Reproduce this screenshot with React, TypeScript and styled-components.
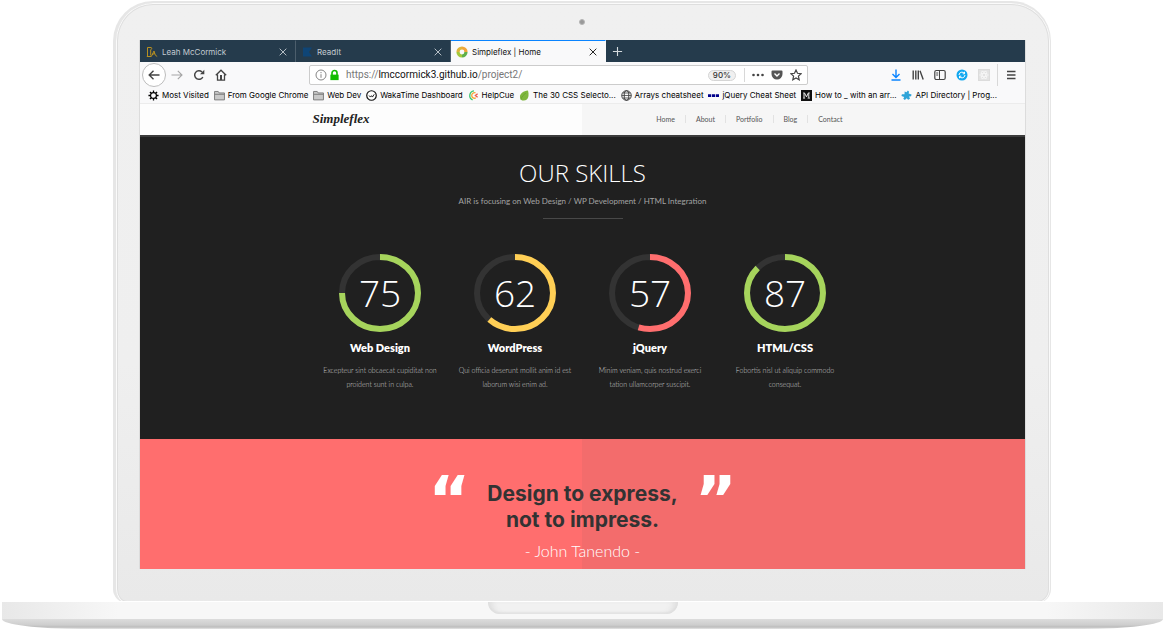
import React from "react";
import styled, { createGlobalStyle } from "styled-components";

const GlobalStyle = createGlobalStyle`
  *, *::before, *::after { box-sizing: border-box; }
  body { margin: 0; background: #fff; }
  button, input { font: inherit; color: inherit; }
  h1, h2, h3, p, ul, blockquote { margin: 0; padding: 0; }
  a { color: inherit; text-decoration: none; }
`;

const ui = `Inter, "Liberation Sans", sans-serif`;
const display = `"Open Sans", "Noto Sans", sans-serif`;
const copy = `Lato, "Open Sans", sans-serif`;

/* Laptop shell */

const Lid = styled.div`
  margin: 1px 113px 0;
  padding: 37px 25px 34px 24px;
  border: 1px solid #e6e6e6;
  border-width: 2px 1px 0 3px;
  border-radius: 40px 40px 14px 14px;
  background: linear-gradient(#f0f0f0, #efefef 60%, #e9e9e9);
  box-shadow: inset 0 0 0 1px #fafafa, inset 0 0 0 2px #dedede;
  position: relative;
`;

const Camera = styled.span`
  position: absolute;
  top: 16px;
  left: 50%;
  width: 6px;
  height: 6px;
  margin-left: -4px;
  border: 1px solid #b5b5b5;
  border-radius: 50%;
  background: #999;
`;

const Screen = styled.div`
  box-shadow: -1px 0 #dcdcdc, 1px 0 #dcdcdc;
  background: #202020;
  overflow: hidden;
`;

const Base = styled.div`
  position: relative;
  margin: -2px 1px 0 2px;
`;

const Deck = styled.div`
  display: flex;
  justify-content: center;
  height: 18px;
  border-top: 1px solid #fff;
  background: linear-gradient(90deg, #e8e8e8, #f7f7f7 10%, #f7f7f7 90%, #e8e8e8);
`;

const Notch = styled.div`
  width: 190px;
  height: 12px;
  border-radius: 0 0 16px 16px;
  background: #f1f1f1;
  box-shadow: inset 8px 0 6px -4px #dedede, inset -8px 0 6px -4px #dedede, inset 0 -2px 2px #e2e2e2;
`;

const Underside = styled.div`
  height: 10px;
  border-radius: 0 0 80px 80px / 0 0 10px 10px;
  background: linear-gradient(#dcdcdc, #cdcdcd 60%, #bdbdbd 80%, #e6e6e6);
`;

/* Browser chrome */

const TabBar = styled.div`
  display: flex;
  height: 22px;
  padding-left: 1px;
  background: #253b4c;
  font: 8px/22px ${ui};
`;

const TabItem = styled.div<{ $active?: boolean }>`
  display: flex;
  align-items: center;
  gap: 4px;
  width: 155px;
  padding: 0 6px 0 5px;
  border-top: 1px solid ${(p) => (p.$active ? "#0a84ff" : "#253b4c")};
  border-right: 1px solid ${(p) => (p.$active ? "#f9f9fa" : "#4c5e6c")};
  background: ${(p) => (p.$active ? "#f9f9fa" : "#253b4c")};
  color: ${(p) => (p.$active ? "#111" : "#c3cad0")};
`;

const TabTitle = styled.span`
  flex: 1;
  white-space: nowrap;
`;

const IconButton = styled.button<{ $round?: boolean }>`
  display: flex;
  align-items: center;
  justify-content: center;
  flex: none;
  width: ${(p) => (p.$round ? 24 : 22)}px;
  height: ${(p) => (p.$round ? 24 : 22)}px;
  padding: 0;
  border: ${(p) => (p.$round ? "1px solid #bdbdbd" : "0")};
  border-radius: ${(p) => (p.$round ? "50%" : "2px")};
  background: ${(p) => (p.$round ? "#fff" : "none")};
  color: inherit;
`;

const CloseButton = styled(IconButton)`
  width: 12px;
  height: 12px;
`;

const NewTabButton = styled(IconButton)`
  color: #d4dade;
`;

const PocketButton = styled(IconButton)`
  width: 16px;
`;

const Toolbar = styled.div`
  display: flex;
  align-items: center;
  height: 26px;
  padding: 0 3px 0 2px;
  background: #f9f9fa;
  color: #444;
`;

const AddressBar = styled.form`
  display: flex;
  align-items: center;
  flex: 1;
  height: 20px;
  margin: 0 77px;
  padding: 0 0 0 5px;
  border: 1px solid #ccc;
  border-radius: 2px;
  background: #fff;
`;

const AddressField = styled.label`
  display: flex;
  flex: 1;
  margin-left: 4px;
  position: relative;
  font: 10px/20px Roboto, sans-serif;
`;

const AddressInput = styled.input`
  width: 100%;
  padding: 0;
  border: 0;
  outline: 0;
  background: none;
  color: transparent;
`;

const AddressText = styled.span`
  position: absolute;
  inset: 0;
  color: #777;
  pointer-events: none;
  b { font-weight: 400; color: #111; }
`;

const Zoom = styled.button`
  height: 11px;
  padding: 0 4px;
  border: 1px solid #d5d5d5;
  border-radius: 6px;
  background: #f0f0f0;
  font: 500 8px/9px ${ui};
  color: #333;
`;

const Divider = styled.span<{ $tall?: boolean }>`
  width: 1px;
  height: ${(p) => (p.$tall ? 22 : 14)}px;
  margin: ${(p) => (p.$tall ? "0 2px" : "0 2px 0 8px")};
  background: #d8d8d8;
`;

const Bookmarks = styled.nav`
  display: flex;
  align-items: center;
  justify-content: space-between;
  height: 15px;
  padding: 0 28px 0 8px;
  background: #f9f9fa;
  font: 8px/15px ${ui};
  color: #000;
  white-space: nowrap;
`;

const Bookmark = styled.a`
  display: flex;
  align-items: center;
  gap: 3px;
`;

/* Web page */

const Header = styled.header`
  height: 34px;
  border-top: 1px solid #ececec;
  border-bottom: 2px solid #3c3c3c;
  background: linear-gradient(90deg, #fdfdfd 50%, #f6f6f6 50%);
`;

const HeaderInner = styled.div`
  display: flex;
  align-items: center;
  justify-content: space-between;
  max-width: 540px;
  height: 30px;
  margin: 0 auto;
`;

const Brand = styled.a`
  font: italic bold 13px/28px "Liberation Serif", serif;
  color: #222;
`;

const SiteNav = styled.nav`
  display: flex;
  font: 7px/8px ${copy};
  color: #555;
  a { padding: 0 10px; }
  a + a { border-left: 1px solid #e2e2e2; }
`;

const Skills = styled.section`
  padding: 20px 0 48px;
  background: #202020;
  color: #fff;
  text-align: center;
`;

const SkillsTitle = styled.h1`
  font: 300 24px/32px ${display};
`;

const SkillsLead = styled.p`
  margin-top: 5px;
  font: 8px/14px ${copy};
  color: #a4a4a4;
`;

const Rule = styled.hr`
  width: 80px;
  height: 1px;
  margin: 10px auto 35px;
  border: 0;
  background: #484848;
`;

const SkillGrid = styled.div`
  display: grid;
  grid-template-columns: repeat(4, 1fr);
  max-width: 540px;
  margin: 0 auto;
`;

const Gauge = styled.div`
  display: grid;
  justify-items: center;
  align-items: start;
  svg, span { grid-area: 1 / 1; }
`;

const GaugeValue = styled.span`
  font: 300 37px/78px ${display};
`;

const SkillName = styled.h2`
  margin-top: 8px;
  font: 800 11px/16px ${copy};
`;

const SkillText = styled.p`
  margin-top: 7px;
  font: 300 7px/14px ${copy};
  color: #ccc;
`;

const Testimonial = styled.section`
  display: flex;
  justify-content: center;
  gap: 17px;
  height: 130px;
  padding-top: 33px;
  background: linear-gradient(90deg, #ff6e6e 50%, #f36c6c 50%);
  text-align: center;
  color: #fff;
`;

const QuoteMark = styled.span`
  font: bold 64px/56px "DejaVu Sans", sans-serif;
`;

const Quote = styled.blockquote`
  margin-top: 9px;
  font: 700 21px/26px ${ui};
  color: #333;
`;

const Author = styled.p`
  margin-top: 8px;
  font: 300 16px/20px ${copy};
  color: #fff;
`;

/* Icons */

type IconProps = { size?: number; width?: number; children: React.ReactNode };
const Icon = ({ size = 12, width = 1, children }: IconProps) => (
  <svg width={size} height={size} viewBox="0 0 12 12" fill="none" stroke="currentColor" strokeWidth={width} aria-hidden="true">
    {children}
  </svg>
);

const Close = () => <Icon size={10} width={1.1}><path d="M2 2l8 8M10 2l-8 8" /></Icon>;

const Folder = () => (
  <Icon size={11}><path d="M.6 10.8V1.6h4l1 1.6h5.8v7.6z" fill="#c9c9c9" stroke="#777" /><path d="M.6 4.7h10.8" stroke="#777" /></Icon>
);

const bookmarks: { label: string; icon: React.ReactNode }[] = [
  {
    label: "Most Visited",
    icon: <Icon size={11}><circle cx="6" cy="6" r="3.2" strokeWidth="1.3" /><path d="M6 .5v2M6 9.500v2M.5 6h2M9.500 6h2M2.100 2.100l1.500 1.500M8.400 8.400l1.500 1.500M9.900 2.100L8.400 3.600M3.600 8.400L2.100 9.900" strokeWidth="1.400" /></Icon>,
  },
  { label: "From Google Chrome", icon: <Folder /> },
  { label: "Web Dev", icon: <Folder /> },
  {
    label: "WakaTime Dashboard",
    icon: <Icon size={11} width={1.3}><circle cx="6" cy="6" r="5.200" fill="#fff" stroke="#111" /><path d="M3.300 6l1.500 1.700L6 6.200l1 1.500 2-3" stroke="#111" strokeWidth="1" /></Icon>,
  },
  {
    label: "HelpCue",
    icon: <Icon size={11} width={1.4}><path d="M6.500.9A5.200 5.200 0 0 0 5 10.800" stroke="#35c46b" /><path d="M8.200 3.200a3 3 0 1 0 .3 5.400" stroke="#f6a534" /><path d="M10.500 4L8 6l2.500 2" stroke="#ef5b4c" /></Icon>,
  },
  {
    label: "The 30 CSS Selecto...",
    icon: <Icon size={11}><path d="M9.700.5C5 1 1 3.500 1 7.500c0 2.500 1.700 4 4.200 4 5.500 0 6-6.500 4.500-11z" fill="#7fb73e" stroke="none" /><path d="M2 10.500C3 7 5 5 7.500 3.500" stroke="#609c28" strokeWidth=".7" /></Icon>,
  },
  {
    label: "Arrays cheatsheet",
    icon: <Icon size={11}><circle cx="6" cy="6" r="5.200" stroke="#333" /><ellipse cx="6" cy="6" rx="2.500" ry="5.200" stroke="#333" /><path d="M.8 6h10.400M1.700 3.300h8.600M1.700 8.700h8.600" stroke="#333" strokeWidth=".8" /></Icon>,
  },
  {
    label: "jQuery Cheat Sheet",
    icon: <Icon size={11}><path d="M0 6h3.500M4.300 6h3.400M8.500 6H12" stroke="#00008b" strokeWidth="3" /></Icon>,
  },
  {
    label: "How to _ with an arr...",
    icon: <Icon size={11}><path d="M0 0h12v12H0z" fill="#111" stroke="none" /><path d="M2.500 3.200h1.300L6 7.500l2-4.300h1.500M3.300 3.500v5M2.300 8.800h2.200M8.500 3.500v5M7.200 8.800h2.500" stroke="#fff" /></Icon>,
  },
  {
    label: "API Directory | Prog...",
    icon: <Icon size={11}><path d="M4 1.500l2 1 1.500-2 1.300 1.300-.5 2 3.200 1-.5 2-2.200.3 1 2.500-2 .9-1.600-1.500-2 2-1.700-1.500 1-2L.5 6.500 1 4.700l2.800-.2z" fill="#2fa4d8" stroke="none" /></Icon>,
  },
];

const skills = [
  { value: 75, arc: 75, color: "#a6d45c", name: "Web Design", text: ["Excepteur sint obcaecat cupiditat non", "proident sunt in culpa."] },
  { value: 62, arc: 62, color: "#ffcf55", name: "WordPress", text: ["Qui officia deserunt mollit anim id est", "laborum wisi enim ad."] },
  { value: 57, arc: 55, color: "#ff6e6e", name: "jQuery", text: ["Minim veniam, quis nostrud exerci", "tation ullamcorper suscipit."] },
  { value: 87, arc: 87, color: "#a6d45c", name: "HTML/CSS", text: ["Fobortis nisl ut aliquip commodo", "consequat."] },
];

const ringPath = "M41 3A38 36 0 0 1 41 75A38 36 0 0 1 41 3";

const Ring = ({ arc, color }: { arc: number; color: string }) => (
  <svg width="82" height="78" viewBox="0 0 82 78" fill="none" strokeWidth="6" aria-hidden="true">
    <path d={ringPath} stroke="#333" />
    <path d={ringPath} stroke={color} pathLength={100} strokeDasharray={`${arc} 100`} />
  </svg>
);

export default function App() {
  return (
    <>
      <GlobalStyle />
      <Lid>
        <Camera />
        <Screen>
          <TabBar>
            <TabItem>
              <Icon size={12}><path d="M1.500 10V1.500h3.500c1 0 1 2-.3 2.200V9.500M.8 10.500h4.500L8 5l1.200 4 2 1.500M6 8.500L8.500 7.500" stroke="#c99a1c" strokeWidth=".9" /></Icon>
              <TabTitle>Leah McCormick</TabTitle>
              <CloseButton aria-label="Close Leah McCormick"><Close /></CloseButton>
            </TabItem>
            <TabItem>
              <Icon size={12}><path d="M2 1.500h9L8 6l3 4.500H2z" fill="#0f4576" stroke="none" /></Icon>
              <TabTitle>ReadIt</TabTitle>
              <CloseButton aria-label="Close ReadIt"><Close /></CloseButton>
            </TabItem>
            <TabItem $active>
              <Icon size={12} width={3.2}>
                <path d="M2 6A4 4 0 0 1 6 2" stroke="#ddb53c" /><path d="M6 2a4 4 0 0 1 4 4" stroke="#f0a53a" />
                <path d="M10 6a4 4 0 0 1-4 4" stroke="#5fb04a" /><path d="M6 10a4 4 0 0 1-4-4" stroke="#a4c83c" />
              </Icon>
              <TabTitle>Simpleflex | Home</TabTitle>
              <CloseButton aria-label="Close Simpleflex"><Close /></CloseButton>
            </TabItem>
            <NewTabButton aria-label="New tab"><Icon size={11} width={1.2}><path d="M6 1v10M1 6h10" /></Icon></NewTabButton>
          </TabBar>

          <Toolbar>
            <IconButton $round aria-label="Back"><Icon width={1.4}><path d="M11.500 6H1.500M5.500 1.800L1.200 6l4.300 4.200" /></Icon></IconButton>
            <IconButton aria-label="Forward"><Icon width={1.1}><path d="M.5 6h10.500M6.800 1.800L11 6l-4.200 4.200" stroke="#a5a5a5" /></Icon></IconButton>
            <IconButton aria-label="Reload"><Icon width={1.5}><path d="M9.800 8A4.300 4.300 0 1 1 9 3" /><path d="M11.300.8v4.400H7z" fill="currentColor" stroke="none" /></Icon></IconButton>
            <IconButton aria-label="Home"><Icon width={1.3}><path d="M.8 6.300L6 1.200l5.200 5.100M2.500 5.500v5.700h7V5.500" /><path d="M6 6v5" strokeWidth="2" /></Icon></IconButton>
            <AddressBar>
              <Icon size={12} width={0.9}><circle cx="6" cy="6" r="5" stroke="#777" /><path d="M6 5.200v3.600M6 3v1.200" stroke="#777" /></Icon>
              <Icon size={15}><path d="M4 5.500V4a2 2 0 0 1 4 0v1.500" stroke="#12bc00" strokeWidth="1.300" /><path d="M2.700 5.300h6.600v4.400H2.700z" fill="#12bc00" stroke="none" /></Icon>
              <AddressField>
                <AddressInput aria-label="Address" />
                <AddressText>https://<b>lmccormick3.github.io</b>/project2/</AddressText>
              </AddressField>
              <Zoom type="button">90%</Zoom>
              <Divider />
              <IconButton type="button" aria-label="Page actions"><Icon><g fill="currentColor" stroke="none"><circle cx="1.500" cy="6" r="1.300" /><circle cx="6" cy="6" r="1.300" /><circle cx="10.500" cy="6" r="1.300" /></g></Icon></IconButton>
              <PocketButton type="button" aria-label="Save to Pocket"><Icon><path d="M1.500 1.500h9a1 1 0 0 1 1 1V5a5.500 5.500 0 0 1-11 0V2.500a1 1 0 0 1 1-1z" fill="#555" stroke="none" /><path d="M3.500 4.500L6 7l2.500-2.500" stroke="#fff" strokeWidth="1.400" /></Icon></PocketButton>
              <IconButton type="button" aria-label="Bookmark"><Icon width={1.2}><path d="M6 1l1.500 3.300 3.600.4-2.700 2.400.8 3.600L6 8.900l-3.200 1.800.8-3.600L.9 4.700l3.600-.4z" /></Icon></IconButton>
            </AddressBar>
            <IconButton aria-label="Downloads"><Icon width={1.4}><path d="M6 .5v8M2.500 5L6 8.500 9.500 5M1.500 11h9" stroke="#0a84ff" /></Icon></IconButton>
            <IconButton aria-label="Library"><Icon width={1.4}><path d="M1.200 1.500v9M3.800 1.500v9M6.300 1.500v9M8 1.800l3.200 8.700" /></Icon></IconButton>
            <IconButton aria-label="Sidebars"><Icon width={1.2}><rect x=".8" y="1.500" width="10.400" height="9" rx="1.500" /><path d="M5.500 1.500v9M2.200 4h2M2.200 6h2" strokeWidth="1" /></Icon></IconButton>
            <IconButton aria-label="Sync"><Icon><circle cx="6" cy="6" r="5.500" fill="#12a8f0" stroke="none" /><path d="M3 6a3 3 0 0 1 5.500-1.500M9 6a3 3 0 0 1-5.500 1.500M8.500 2.800v2H6.700M3.500 9.200v-2h1.800" stroke="#fff" /></Icon></IconButton>
            <IconButton aria-label="Extension"><Icon><rect x=".5" y=".5" width="11" height="11" fill="#e2e2e2" stroke="#dcdcdc" /><g stroke="#f7f7f7" strokeWidth=".8"><ellipse cx="6" cy="6" rx="4.300" ry="1.700" /><ellipse cx="6" cy="6" rx="4.300" ry="1.700" transform="rotate(60 6 6)" /><ellipse cx="6" cy="6" rx="4.300" ry="1.700" transform="rotate(120 6 6)" /></g></Icon></IconButton>
            <Divider $tall />
            <IconButton aria-label="Menu"><Icon width={1.4}><path d="M2 2.500h8.500M2 6h8.500M2 9.500h8.500" /></Icon></IconButton>
          </Toolbar>

          <Bookmarks aria-label="Bookmarks">
            {bookmarks.map((b) => (
              <Bookmark href="#" key={b.label}>{b.icon}{b.label}</Bookmark>
            ))}
          </Bookmarks>

          <Header>
            <HeaderInner>
              <Brand href="#">Simpleflex</Brand>
              <SiteNav aria-label="Site">
                {["Home", "About", "Portfolio", "Blog", "Contact"].map((n) => <a href="#" key={n}>{n}</a>)}
              </SiteNav>
            </HeaderInner>
          </Header>

          <Skills>
            <SkillsTitle>OUR SKILLS</SkillsTitle>
            <SkillsLead>AIR is focusing on Web Design / WP Development / HTML Integration</SkillsLead>
            <Rule />
            <SkillGrid>
              {skills.map((s) => (
                <article key={s.name}>
                  <Gauge><Ring arc={s.arc} color={s.color} /><GaugeValue>{s.value}</GaugeValue></Gauge>
                  <SkillName>{s.name}</SkillName>
                  <SkillText>{s.text[0]}<br />{s.text[1]}</SkillText>
                </article>
              ))}
            </SkillGrid>
          </Skills>

          <Testimonial>
            <QuoteMark>“</QuoteMark>
            <div>
              <Quote>Design to express,<br />not to impress.</Quote>
              <Author>- John Tanendo -</Author>
            </div>
            <QuoteMark>”</QuoteMark>
          </Testimonial>
        </Screen>
      </Lid>
      <Base>
        <Deck><Notch /></Deck>
        <Underside />
      </Base>
    </>
  );
}
